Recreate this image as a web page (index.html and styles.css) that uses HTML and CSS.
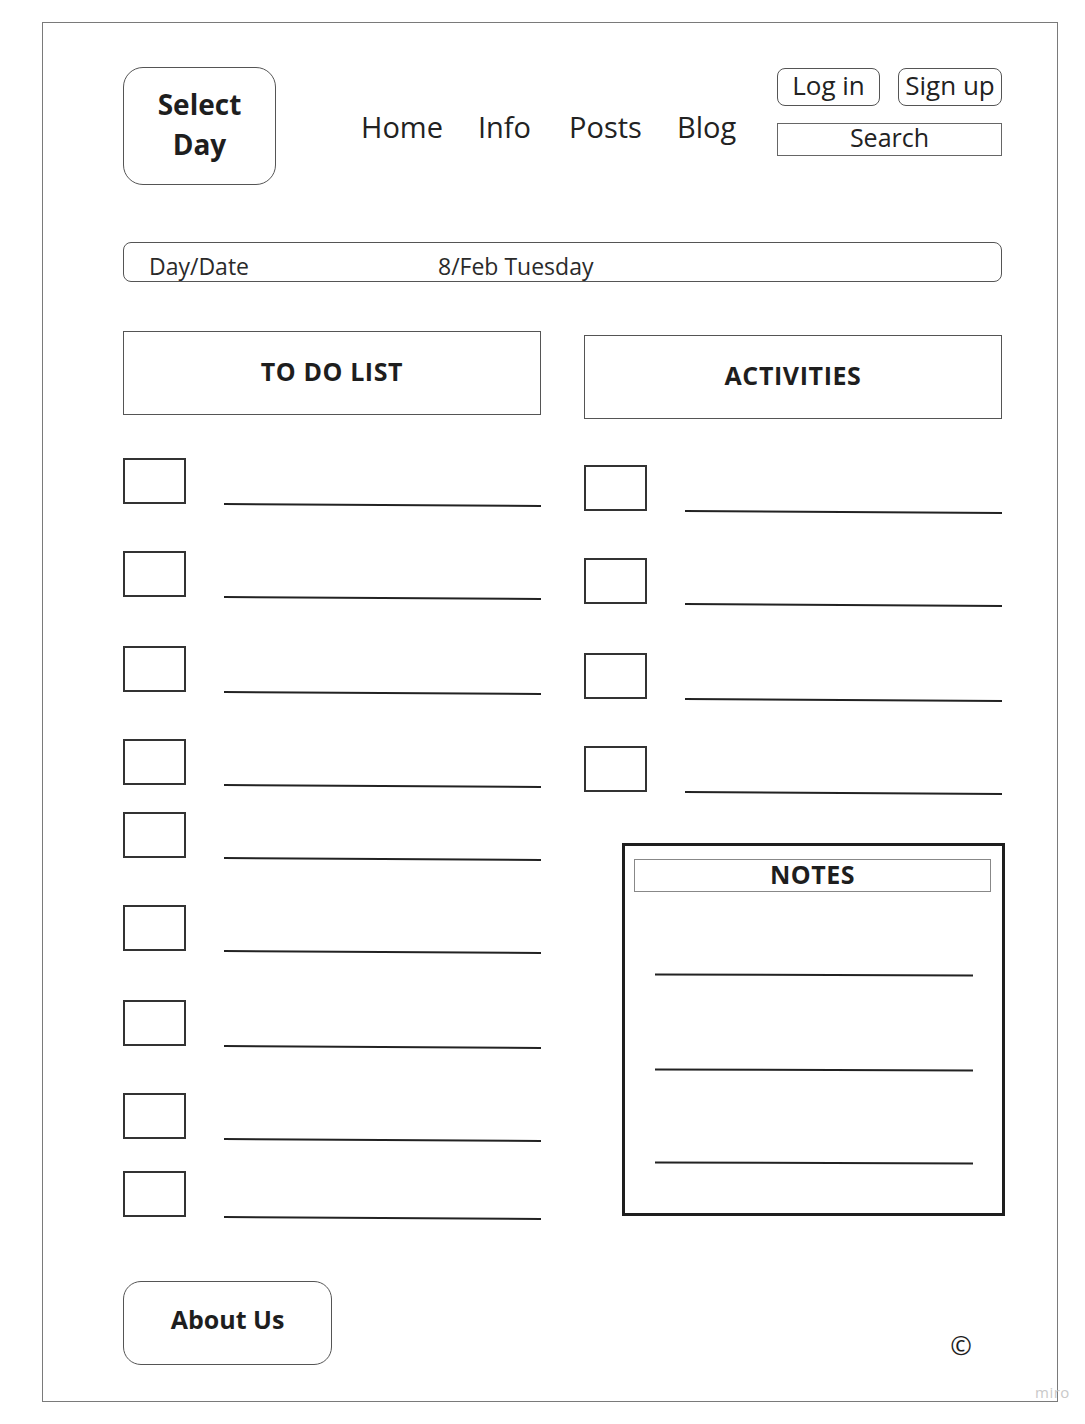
FILE: index.html
```html
<!DOCTYPE html>
<html lang="en">
<head>
    <meta charset="UTF-8">
    <meta name="viewport" content="width=device-width, initial-scale=1.0">
    <title>Select Day</title>
    <link rel="stylesheet" href="styles.css">
</head>
<body>
    <div class="board">
        <header class="top">
            <div class="select-day">Select<br>Day</div>
            <nav class="nav">
                <a href="#">Home</a>
                <a href="#">Info</a>
                <a href="#">Posts</a>
                <a href="#">Blog</a>
            </nav>
            <div class="account">
                <div class="account-buttons">
                    <button class="pill login">Log in</button>
                    <button class="pill signup">Sign up</button>
                </div>
                <div class="search">Search</div>
            </div>
        </header>

        <div class="date-bar">
            <span class="date-label">Day/Date</span>
            <span class="date-value">8/Feb Tuesday</span>
        </div>

        <div class="columns">
            <section class="todo">
                <div class="col-title">TO DO LIST</div>
                <div class="row first"><span class="check"></span><span class="rule"></span></div>
                <div class="row"><span class="check"></span><span class="rule"></span></div>
                <div class="row wide"><span class="check"></span><span class="rule"></span></div>
                <div class="row"><span class="check"></span><span class="rule"></span></div>
                <div class="row tight"><span class="check"></span><span class="rule"></span></div>
                <div class="row"><span class="check"></span><span class="rule"></span></div>
                <div class="row wide"><span class="check"></span><span class="rule"></span></div>
                <div class="row"><span class="check"></span><span class="rule"></span></div>
                <div class="row close"><span class="check"></span><span class="rule"></span></div>
            </section>

            <section class="activities">
                <div class="col-title">ACTIVITIES</div>
                <div class="row first"><span class="check"></span><span class="rule"></span></div>
                <div class="row"><span class="check"></span><span class="rule"></span></div>
                <div class="row wide"><span class="check"></span><span class="rule"></span></div>
                <div class="row"><span class="check"></span><span class="rule"></span></div>

                <div class="notes">
                    <div class="notes-title">NOTES</div>
                    <div class="notes-line"></div>
                    <div class="notes-line"></div>
                    <div class="notes-line last"></div>
                </div>
            </section>
        </div>

        <footer class="bottom">
            <button class="about">About Us</button>
            <span class="copy">&copy;</span>
        </footer>
    </div>
    <div class="watermark">miro</div>
</body>
</html>
```

FILE: styles.css
```css
body, html {
    margin: 0;
    padding: 0;
    font-family: "Open Sans", "Noto Sans", sans-serif;
    color: #1e1e1e;
    background: #fff;
}
.board {
    width: 1016px;
    box-sizing: border-box;
    margin: 22px 0 0 42px;
    border: 1px solid #7a7a7a;
    padding: 44px 55px 36px 80px;
}
.top {
    display: flex;
    align-items: flex-start;
}
.select-day {
    width: 153px;
    height: 118px;
    box-sizing: border-box;
    border: 1px solid #555;
    border-radius: 20px;
    display: flex;
    align-items: center;
    justify-content: center;
    text-align: center;
    font-size: 28px;
    font-weight: 700;
    line-height: 40px;
    padding-bottom: 4px;
}
.nav {
    display: flex;
    gap: 35px;
    margin: 40px 0 0 85px;
}
.nav a {
    color: #222;
    text-decoration: none;
    font-size: 29px;
    line-height: 40px;
}
.nav a:nth-child(3) { margin-left: 3px; }
.account {
    margin: 1px 0 0 auto;
    width: 225px;
}
.account-buttons {
    display: flex;
    justify-content: space-between;
}
.pill {
    height: 38px;
    box-sizing: border-box;
    border: 1px solid #555;
    border-radius: 8px;
    background: #fff;
    font-family: inherit;
    font-size: 26px;
    color: #222;
    padding: 0 0 5px;
    line-height: 32px;
    display: flex;
    align-items: center;
    justify-content: center;
}
.login { width: 103px; }
.signup { width: 104px; }
.search {
    margin-top: 17px;
    height: 33px;
    box-sizing: border-box;
    border: 1px solid #666;
    text-align: center;
    font-size: 25px;
    line-height: 27px;
    color: #222;
}
.date-bar {
    margin-top: 57px;
    height: 40px;
    box-sizing: border-box;
    border: 1px solid #555;
    border-radius: 8px;
    padding: 8px 0 0 25px;
    font-size: 23px;
    line-height: 30px;
    color: #2a2a2a;
    display: flex;
}
.date-label {
    width: 289px;
}
.columns {
    display: grid;
    grid-template-columns: 418px 418px;
    gap: 43px;
    margin-top: 49px;
}
.activities {
    padding-top: 4px;
}
.col-title {
    height: 84px;
    box-sizing: border-box;
    border: 1px solid #555;
    display: flex;
    align-items: center;
    justify-content: center;
    font-size: 25px;
    font-weight: 700;
    letter-spacing: 0.6px;
    padding-bottom: 4px;
}
.row {
    display: flex;
    align-items: flex-end;
    margin-top: 47px;
}
.row.first { margin-top: 43px; }
.activities .row.first { margin-top: 46px; }
.row.wide { margin-top: 49px; }
.row.tight { margin-top: 27px; }
.row.close { margin-top: 32px; }
.check {
    width: 63px;
    height: 46px;
    box-sizing: border-box;
    border: 2px solid #333;
    flex-shrink: 0;
}
.rule {
    height: 2px;
    width: 318px;
    margin: 0 0 -2px 38px;
    background: #222;
    transform: rotate(0.35deg);
}
.notes {
    width: 383px;
    height: 373px;
    box-sizing: border-box;
    margin: 51px 0 0 38px;
    border: 3px solid #1e1e1e;
    padding: 13px 0 0 9px;
}
.notes-title {
    width: 357px;
    height: 33px;
    box-sizing: border-box;
    border: 1px solid #888;
    text-align: center;
    font-size: 25px;
    font-weight: 700;
    line-height: 28px;
    letter-spacing: 0.5px;
}
.notes-line {
    width: 318px;
    height: 2px;
    margin: 82px 0 0 21px;
    background: #222;
    transform: rotate(0.2deg);
}
.notes-line + .notes-line { margin-top: 93px; }
.notes-line.last { margin-top: 91px; }
.bottom {
    display: flex;
    justify-content: space-between;
    align-items: flex-end;
    margin-top: 64px;
}
.about {
    width: 209px;
    height: 84px;
    box-sizing: border-box;
    border: 1px solid #555;
    border-radius: 18px;
    background: #fff;
    font-family: inherit;
    font-size: 25px;
    font-weight: 700;
    color: #1e1e1e;
    padding: 0 0 8px;
}
.copy {
    font-size: 26px;
    line-height: 30px;
    margin: 0 30px 5px 0;
}
.watermark {
    position: absolute;
    left: 1035px;
    top: 1382px;
    font-size: 15px;
    color: #c9c9c9;
    letter-spacing: 0.5px;
}
```
